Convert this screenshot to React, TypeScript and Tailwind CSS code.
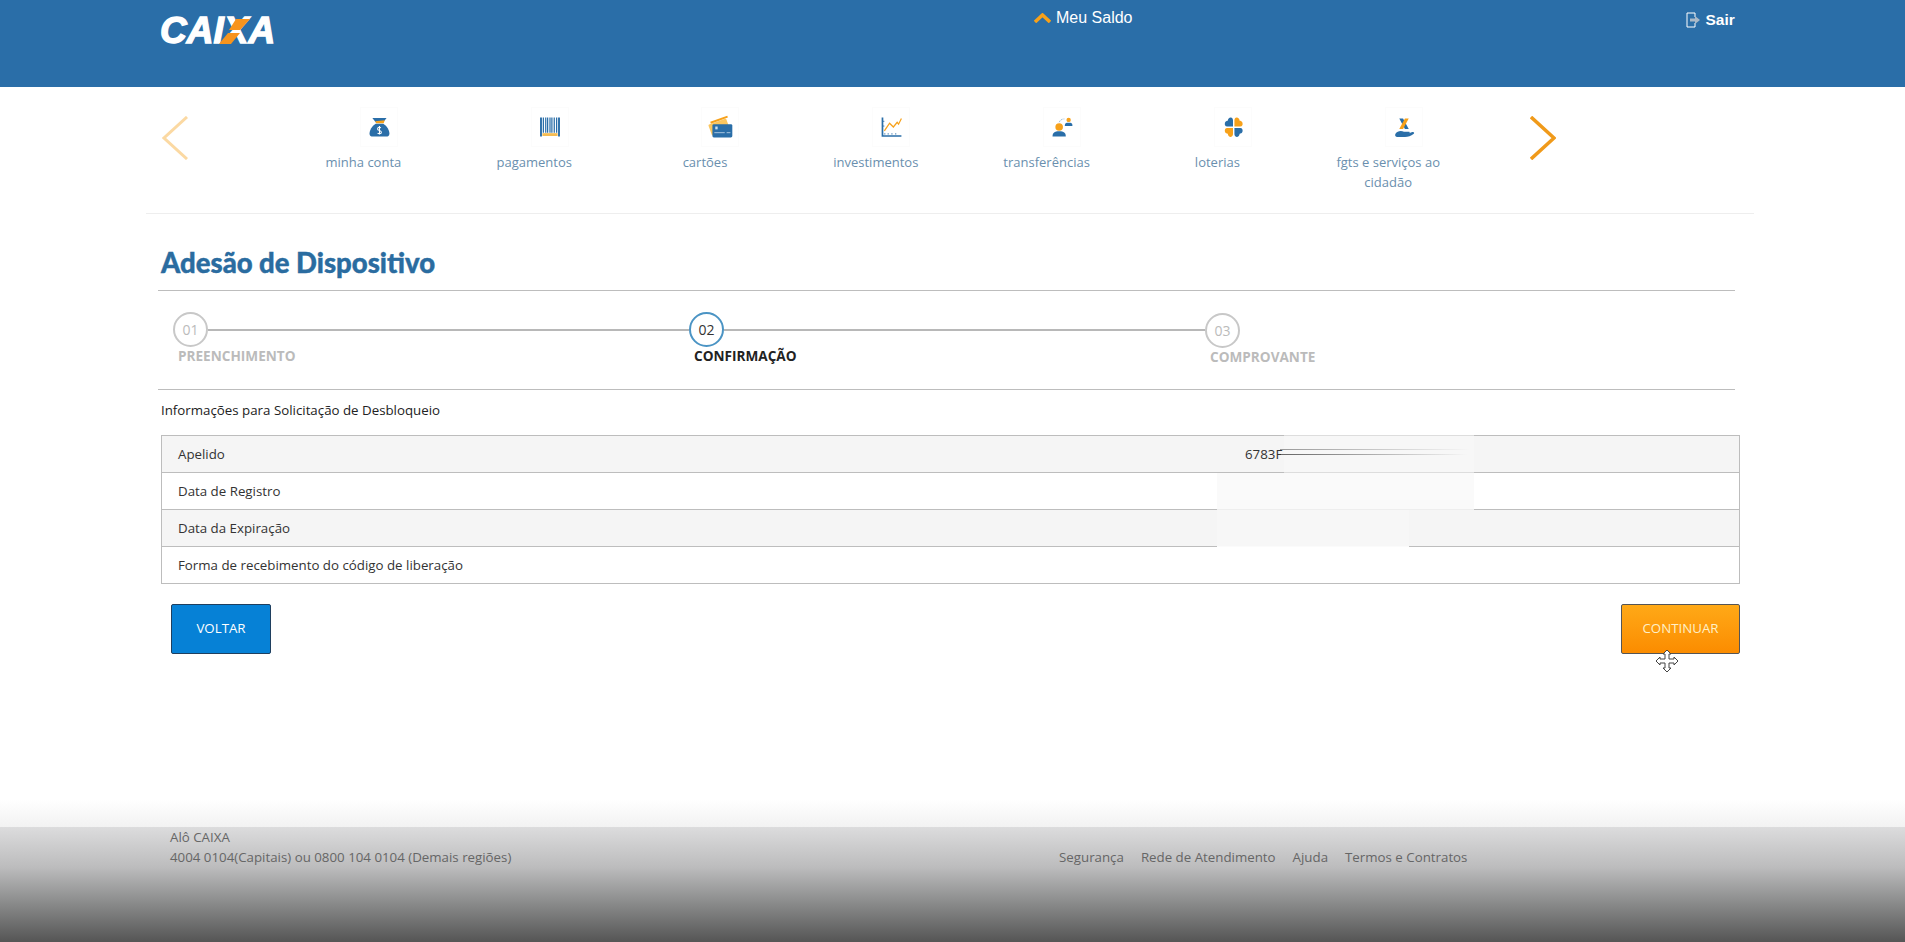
import { ReactNode } from "react";

const sans = "font-['Open_Sans',sans-serif]";

// ---------------- ICONES DO MENU ----------------
const BLUE = "#2a6ea8";
const ORANGE = "#f7a11a";

function BagIcon() {
  return (
    <svg viewBox="0 0 38 40" className="w-full h-full">
      <path d="M12 10.500 L27 10.500 L23.500 15 L15.500 15 Z" fill={BLUE} />
      <path d="M15 14 L25 13 L24 16 L16 16 Z" fill={ORANGE} />
      <path d="M15.500 16.500 L23.500 16.500 C27.500 19 30 23.500 30 27 C30 29 28.500 30 26.500 30 L12.500 30 C10.500 30 9 29 9 27 C9 23.500 11.500 19 15.500 16.500 Z" fill={BLUE} />
      <path d="M21 21 C20 20 17.500 20 17.500 22 C17.500 24 21.500 23.500 21.500 25.500 C21.500 27.500 18.500 27.500 17.500 26.500 M19.500 19 L19.500 28" stroke="#fff" strokeWidth="1.100" fill="none" />
    </svg>
  );
}

function BarcodeIcon() {
  return (
    <svg viewBox="0 0 38 40" className="w-full h-full">
      <path d="M9.500 10 V30 M28.500 10 V30" stroke={BLUE} strokeWidth="2" fill="none" />
      <path d="M12 10 V26 M14.500 10 V26 M16.500 10 V26 M19 10 V26 M21 10 V26 M23.500 10 V26 M26 10 V26" stroke={BLUE} strokeWidth="1.300" />
      <rect x="11" y="26.500" width="16" height="3" fill="#f5bc52" />
    </svg>
  );
}

function CardsIcon() {
  return (
    <svg viewBox="0 0 38 40" className="w-full h-full">
      <rect x="8" y="14" width="20" height="12" rx="1" fill="#fbc65f" transform="rotate(-20 18 20)" />
      <path d="M9 15.500 L27 9" stroke={ORANGE} strokeWidth="2" />
      <rect x="11" y="17" width="21" height="14" rx="1.500" fill={BLUE} />
      <rect x="14" y="19.500" width="2.500" height="3" fill="#cfe1f0" />
      <path d="M13 26 H24 M26 26 H30" stroke="#cfe1f0" strokeWidth="0.800" />
    </svg>
  );
}

function ChartIcon() {
  return (
    <svg viewBox="0 0 38 40" className="w-full h-full">
      <path d="M10 10 V29.500 H30" stroke={BLUE} strokeWidth="1.800" fill="none" />
      <path d="M12 24 L17.500 16 L21.500 20 L25.500 15 L27 17 L30 11" stroke={ORANGE} strokeWidth="1.300" fill="none" />
      <path d="M12.500 28 V26.500 M16 28 V26.500 M20 28 V26.500 M24 28 V26.500 M10 14 H12 M10 19 H12" stroke={BLUE} strokeWidth="0.900" />
    </svg>
  );
}

function TransferIcon() {
  return (
    <svg viewBox="0 0 38 40" className="w-full h-full">
      <circle cx="16" cy="20" r="4" fill={ORANGE} />
      <path d="M9 30 C9 26 11 24.500 16 24.500 C21 24.500 23 26 23 30 Z" fill={BLUE} />
      <circle cx="26" cy="12.500" r="2.300" fill={ORANGE} />
      <path d="M22 19 C22 16 23 15.500 26 15.500 C29 15.500 30 16 30 19 Z" fill={BLUE} />
      <path d="M16 15 C17 12.500 19 11.500 21.500 11.500" stroke="#7fa6c8" strokeWidth="0.800" strokeDasharray="2 1" fill="none" />
    </svg>
  );
}

function CloverIcon() {
  return (
    <svg viewBox="0 0 38 40" className="w-full h-full">
      <g transform="translate(0.500 0)">
        <path d="M18.500 19.500 H12.500 C10 19.500 9.500 17.500 10 15.500 C10.500 14 12 13.500 13 13.500 C13 11.500 14.500 10 16 10 C18 10 18.500 12 18.500 13 Z" fill={BLUE} />
        <path d="M20 19.500 H26 C28.500 19.500 29 17.500 28.500 15.500 C28 14 26.500 13.500 25.500 13.500 C25.500 11.500 24 10 22.500 10 C20.500 10 20 12 20 13 Z" fill={ORANGE} />
        <path d="M18.500 21 H12.500 C10 21 9.500 23 10 25 C10.500 26.500 12 27 13 27 C13 29 14.500 30.500 16 30.500 C18 30.500 18.500 28.500 18.500 27.500 Z" fill={ORANGE} />
        <path d="M20 21 H26 C28.500 21 29 23 28.500 25 C28 26.500 26.500 27 25.500 27 C25.500 29 24 30.500 22.500 30.500 C20.500 30.500 20 28.500 20 27.500 Z" fill={BLUE} />
      </g>
    </svg>
  );
}

function HandIcon() {
  return (
    <svg viewBox="0 0 38 40" className="w-full h-full">
      <path d="M14 11 H18 L24 22 H20 Z" fill={BLUE} />
      <path d="M24 11 H20 L14 22 H18 Z" fill={ORANGE} />
      <path d="M10 27 C12 24 16 23.500 19 25 L24 25 C26 25 25 27 23 27 L27 25.500 C29.500 24.500 30.500 26 29 27.500 C26 30 22 31 18 30.500 L12 30.500 C10 30.500 9 29 10 27 Z" fill={BLUE} />
    </svg>
  );
}

// ---------------- LOGO ----------------
function Logo() {
  return (
    <div className="relative w-[114px] h-[26px] mt-[18px]">
      <span className="block font-['Liberation_Sans',sans-serif] font-bold italic text-[37px] leading-[26px] text-white [-webkit-text-stroke:1.4px_white]">
        CAIXA
      </span>
      <svg viewBox="0 0 114 26" className="absolute left-0 top-0 w-[114px] h-[26px]">
        <path d="M76 1 H90 L80 12 H69 Z" fill="#f7941d" />
        <path d="M59 26 H71 L80 15 H68 Z" fill="#f7941d" />
      </svg>
    </div>
  );
}

// ---------------- MENU ----------------
type MenuItem = { label: ReactNode; icon: ReactNode };

const menu: MenuItem[] = [
  { label: "minha conta", icon: <BagIcon /> },
  { label: "pagamentos", icon: <BarcodeIcon /> },
  { label: "cartões", icon: <CardsIcon /> },
  { label: "investimentos", icon: <ChartIcon /> },
  { label: "transferências", icon: <TransferIcon /> },
  { label: "loterias", icon: <CloverIcon /> },
  { label: "fgts e serviços ao cidadão", icon: <HandIcon /> },
];

function Step({ num, label, active, last }: { num: string; label: string; active?: boolean; last?: boolean }) {
  return (
    <div className={last ? "w-[516px] pt-px" : "w-[516px]"}>
      <div className="flex items-center">
        <div
          className={
            active
              ? "w-[35px] h-[35px] rounded-full border-2 border-[#4b94c4] flex items-center justify-center text-[14px] text-[#333]"
              : "w-[35px] h-[35px] rounded-full border-2 border-[#c8c8c8] flex items-center justify-center text-[14px] text-[#bbb]"
          }
        >
          {num}
        </div>
        {!last && <div className="flex-1 h-[2px] bg-[#b8b8b8]" />}
      </div>
      <div
        className={
          active
            ? "ml-[5px] text-[13.600px] leading-[20px] font-bold text-[#222] -mt-px"
            : "ml-[5px] text-[13.600px] leading-[20px] font-bold text-[#bbb] -mt-px"
        }
      >
        {label}
      </div>
    </div>
  );
}

export default function App() {
  return (
    <div className={`${sans} h-[942px] overflow-hidden flex flex-col bg-white`}>
      {/* Top Bar */}
      <header className="h-[87px] shrink-0 bg-[#2a6ea8] flex items-start pl-[160px] font-['Liberation_Sans',sans-serif]">
        <Logo />
        <div className="ml-[760px] mt-[7px] flex items-center gap-[5px] text-white text-[16px] leading-[22px]">
          <svg viewBox="0 0 17 10" className="w-[17px] h-[10px]">
            <path d="M1 9 L8.500 2 L16 9" stroke="#f7a11a" strokeWidth="3.500" fill="none" />
          </svg>
          Meu Saldo
        </div>
        <div className="ml-[553px] mt-[11px] flex items-center gap-[5px] text-white font-bold text-[15.500px] leading-[17px]">
          <svg viewBox="0 0 15 16" className="w-[15px] h-[16px]">
            <path d="M9 1 H1 V15 H9 V11 M9 5 V1" stroke="#fff" strokeWidth="1" fill="none" />
            <path d="M4 6.500 H9 V4 L14 8 L9 12 V9.500 H4 Z" fill="#a9b9c8" />
          </svg>
          Sair
        </div>
      </header>

      {/* Menu */}
      <nav className="flex items-start pl-[162px] pt-[20px] h-[126px] shrink-0">
        <svg viewBox="0 0 26 44" className="w-[26px] h-[44px] mt-[9px] opacity-40">
          <path d="M25 1 L2 22 L25 43" stroke="#f7a11a" strokeWidth="3" fill="none" />
        </svg>
        <div className="ml-[90px] flex w-[1196px]">
          {menu.map((item, i) => (
            <div key={i} className="w-[170.800px] flex flex-col items-center">
              <div className="w-[38px] h-[40px] ml-[31px] border border-[#fcfcfc]">{item.icon}</div>
              <span className="mt-[5px] px-[25px] text-center text-[13px] leading-[20px] text-[#6a8fae]">{item.label}</span>
            </div>
          ))}
        </div>
        <svg viewBox="0 0 26 44" className="w-[26px] h-[44px] mt-[9px] ml-[56px]">
          <path d="M1 1 L24 22 L1 43" stroke="#f09a1a" strokeWidth="3.500" fill="none" />
        </svg>
      </nav>
      <div className="ml-[146px] w-[1608px] border-b border-[#eeeeee]" />

      {/* Conteudo */}
      <main className="flex-1 ml-[158px] w-[1582px]">
        <div className="w-[1577px] h-[77px] border-b border-[#bdbdbd] flex items-center pl-[3px] pt-[22px]">
          <h1 className="font-['Lato',sans-serif] font-black text-[27.500px] leading-[32px] text-[#2a6ca0] [-webkit-text-stroke:0.4px_#2a6ca0]">Adesão de Dispositivo</h1>
        </div>

        <div className="w-[1577px] h-[99px] pt-[21px] pl-[15px] border-b border-[#bdbdbd] flex items-start">
          <Step num="01" label="PREENCHIMENTO" />
          <Step num="02" label="CONFIRMAÇÃO" active />
          <Step num="03" label="COMPROVANTE" last />
        </div>

        <p className="pl-[3px] pt-[10px] pb-px text-[13.300px] leading-[20px] text-[#222]">Informações para Solicitação de Desbloqueio</p>

        {/* Tabela */}
        <div className="mt-[14px] ml-[3px] w-[1579px] border border-[#bdbdbd] text-[13.300px] text-[#333]">
          <div className="relative h-[37px] pt-px flex items-center bg-[#f5f5f5] border-b border-[#bdbdbd]">
            <span className="w-[1083px] pl-[16px]">Apelido</span>
            <span>6783F</span>
            <div className="absolute left-[1122px] -top-px w-[190px] h-[38px] bg-[#f7f7f7] border-y border-[#dddddd]" />
            <div className="absolute left-[1118px] top-[13px] w-[190px] h-px bg-gradient-to-r from-[#999999] to-transparent" />
            <div className="absolute left-[1119px] top-[18px] w-[186px] h-px bg-gradient-to-r from-[#666666] to-transparent" />
          </div>
          <div className="relative h-[37px] pt-px flex items-center border-b border-[#bdbdbd]">
            <span className="pl-[16px]">Data de Registro</span>
            <div className="absolute left-[1055px] top-0 w-[257px] h-[37px] bg-[#fafafa] border-b border-[#eeeeee]" />
          </div>
          <div className="relative h-[37px] pt-px flex items-center bg-[#f5f5f5] border-b border-[#bdbdbd]">
            <span className="pl-[16px]">Data da Expiração</span>
            <div className="absolute left-[1055px] top-0 w-[192px] h-[37px] bg-[#f7f7f7] border-b border-[#fbfbfb]" />
          </div>
          <div className="h-[36px] pt-px flex items-center">
            <span className="pl-[16px]">Forma de recebimento do código de liberação</span>
          </div>
        </div>

        <div className="mt-[20px] ml-[13px] w-[1569px] flex justify-between">
          <button className="w-[100px] h-[50px] bg-[#0681d6] border border-[#1f3f5f] rounded-[2px] text-[13.300px] text-white">VOLTAR</button>
          <button className="relative w-[119px] h-[50px] bg-gradient-to-b from-[#ffa916] to-[#fb8c00] border border-[#555555] rounded-[2px] text-[13.300px] text-[#fff0c8]">
            CONTINUAR
            <svg viewBox="0 0 24 24" className="absolute left-[33px] top-[44px] w-[24px] h-[24px]">
              <path d="M12 1 L16 5 H14 V10 H19 V8 L23 12 L19 16 V14 H14 V19 H16 L12 23 L8 19 H10 V14 H5 V16 L1 12 L5 8 V10 H10 V5 H8 Z" fill="#fff" stroke="#444" strokeWidth="1" />
            </svg>
          </button>
        </div>
      </main>

      {/* Rodape */}
      <div className="h-[27px] shrink-0 bg-gradient-to-b from-white to-[#f2f2f2]" />
      <footer className="h-[115px] shrink-0 bg-[linear-gradient(to_bottom,#dcdcdd_0%,#bcbcbd_35%,#8a8b8b_66%,#555555_100%)] flex items-start pl-[170px] text-[13.300px] leading-[20px] text-[#666]">
        <div className="w-[889px]">
          <div>Alô CAIXA</div>
          <div>4004 0104(Capitais) ou 0800 104 0104 (Demais regiões)</div>
        </div>
        <div className="pt-[20px] flex gap-[17px]">
          <a>Segurança</a>
          <a>Rede de Atendimento</a>
          <a>Ajuda</a>
          <a>Termos e Contratos</a>
        </div>
      </footer>
    </div>
  );
}
